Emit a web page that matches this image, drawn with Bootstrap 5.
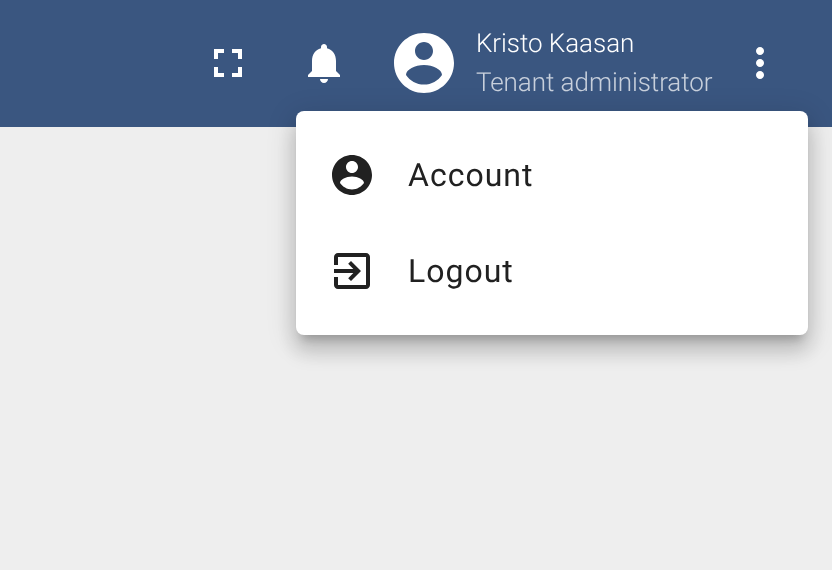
<!DOCTYPE html>
<html lang="en">
<head>
<meta charset="utf-8">
<title>Account menu</title>
<link href="https://cdn.jsdelivr.net/npm/bootstrap@5.3.0/dist/css/bootstrap.min.css" rel="stylesheet">
<style>
html, body { height: 100%; }
body { background: #eeeeee; font-family: Roboto, "Liberation Sans", sans-serif; overflow: hidden; text-rendering: geometricPrecision; }
.app-header { height: 127px; background: #3a5680; padding-right: 48px; padding-bottom: 1px; color: #fff; }
.tool-btn { width: 48px; height: 48px; padding: 0; border: 0; background: transparent; line-height: 0; }
.tool-btn svg, .menu-ico { width: 48px; height: 48px; fill: currentColor; }
.avatar-ico { width: 72px; height: 72px; fill: #fff; }
.user-block { margin-left: 16px; margin-right: 24px; margin-top: 2px; width: 236px; font-weight: 300; font-size: 26px; line-height: 39px; letter-spacing: -.05px; white-space: nowrap; will-change: transform; }
.user-role { opacity: .72; }
.gap-tools { gap: 48px; margin-right: 40px; }
.shell { position: relative; }
.account-menu.dropdown-menu { position: absolute; display: block; top: 111px; left: 296px; width: 512px; margin: 0; padding: 16px 0; border: 0; border-radius: 8px; box-shadow: 0 10px 10px -6px rgba(0,0,0,.2), 0 16px 20px 2px rgba(0,0,0,.14), 0 6px 28px 4px rgba(0,0,0,.12); will-change: transform; }
.account-menu .dropdown-item { height: 96px; padding: 0 32px; gap: 32px; color: #212121; font-size: 32px; letter-spacing: 1px; }
</style>
</head>
<body>
<div class="shell">
  <header class="app-header d-flex align-items-center justify-content-end">
    <div class="d-flex align-items-center gap-tools">
      <button class="tool-btn text-white" aria-label="Fullscreen"><svg viewBox="0 0 24 24"><path d="M7 14H5v5h5v-2H7v-3zm-2-4h2V7h3V5H5v5zm12 7h-3v2h5v-5h-2v3zM14 5v2h3v3h2V5h-5z"/></svg></button>
      <button class="tool-btn text-white" aria-label="Notifications"><svg viewBox="0 0 24 24"><path d="M12 22c1.1 0 2-.9 2-2h-4c0 1.1.89 2 2 2zm6-6v-5c0-3.07-1.64-5.64-4.5-6.32V4c0-.83-.67-1.5-1.5-1.5s-1.5.67-1.5 1.5v.68C7.63 5.36 6 7.92 6 11v5l-2 2v1h16v-1l-2-2z"/></svg></button>
    </div>
    <svg class="avatar-ico" viewBox="0 0 24 24"><path fill-rule="evenodd" d="M12 2C6.48 2 2 6.48 2 12s4.48 10 10 10 10-4.48 10-10S17.52 2 12 2zm0 3c1.66 0 3 1.34 3 3s-1.34 3-3 3-3-1.34-3-3 1.34-3 3-3zm0 7.7c-3 0-6 1.5-6 3.3 1.3 1.9 3.5 3.2 6 3.2s4.7-1.3 6-3.2c0-1.8-3-3.3-6-3.3z"/></svg>
    <div class="user-block">
      <div>Kristo Kaasan</div>
      <div class="user-role">Tenant administrator</div>
    </div>
    <button class="tool-btn text-white" aria-label="More"><svg viewBox="0 0 24 24"><path d="M12 8c1.1 0 2-.9 2-2s-.9-2-2-2-2 .9-2 2 .9 2 2 2zm0 2c-1.1 0-2 .9-2 2s.9 2 2 2 2-.9 2-2-.9-2-2-2zm0 6c-1.1 0-2 .9-2 2s.9 2 2 2 2-.9 2-2-.9-2-2-2z"/></svg></button>
  </header>
  <div class="dropdown-menu account-menu">
    <a class="dropdown-item d-flex align-items-center" href="#"><svg class="menu-ico" viewBox="0 0 24 24"><path fill-rule="evenodd" d="M12 2C6.48 2 2 6.48 2 12s4.48 10 10 10 10-4.48 10-10S17.52 2 12 2zm0 3c1.66 0 3 1.34 3 3s-1.34 3-3 3-3-1.34-3-3 1.34-3 3-3zm0 7.7c-3 0-6 1.5-6 3.3 1.3 1.9 3.5 3.2 6 3.2s4.7-1.3 6-3.2c0-1.8-3-3.3-6-3.3z"/></svg>Account</a>
    <a class="dropdown-item d-flex align-items-center" href="#"><svg class="menu-ico" viewBox="0 0 24 24"><path d="M10.09 15.59L11.5 17l5-5-5-5-1.41 1.41L12.67 11H3v2h9.67l-2.58 2.59zM19 3H5c-1.11 0-2 .9-2 2v4h2V5h14v14H5v-4H3v4c0 1.1.89 2 2 2h14c1.1 0 2-.9 2-2V5c0-1.1-.9-2-2-2z"/></svg>Logout</a>
  </div>
</div>
<script src="https://cdn.jsdelivr.net/npm/bootstrap@5.3.0/dist/js/bootstrap.bundle.min.js"></script>
</body>
</html>
